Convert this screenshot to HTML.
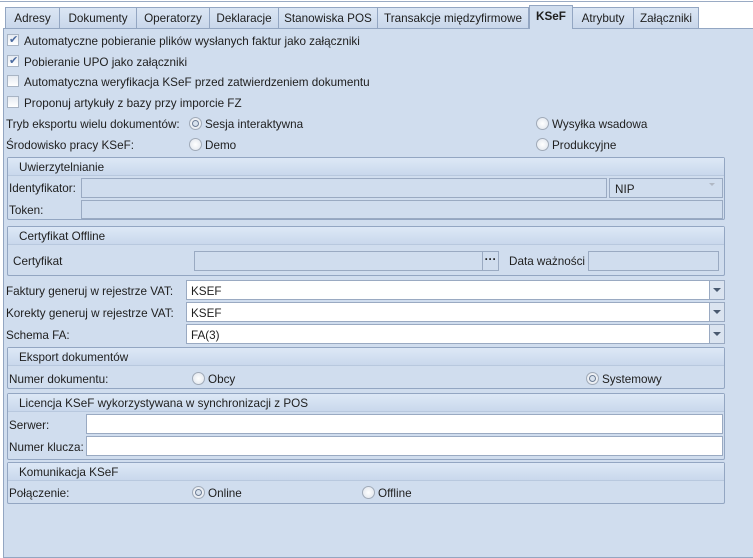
<!DOCTYPE html>
<html><head><meta charset="utf-8"><style>
*{box-sizing:border-box;margin:0;padding:0}
body{width:753px;height:552px;background:#fff;font-family:"Liberation Sans",sans-serif;font-size:11.7px;color:#1e1e1e;position:relative;overflow:hidden}
.a{position:absolute;white-space:nowrap;padding-top:2px}
.topline{position:absolute;left:0;top:1px;width:753px;height:1px;background:#9aabc4}
.tab{position:absolute;top:7px;height:22px;border:1px solid #93a6c2;border-bottom:none;background:linear-gradient(#dbe6f4,#c8d6ea);text-align:center;line-height:22px}
.tab.act{top:5px;height:24px;background:#d0ddee;font-weight:bold;z-index:3}
.panel{position:absolute;left:3px;top:28px;width:760px;height:530px;background:#d0ddee;border:1px solid #93a6c2}
.cb{position:absolute;width:12px;height:12px;border:1px solid #a8b4c4;background:linear-gradient(#e6ebf2,#fff)}
.rd{position:absolute;width:13px;height:13px;border-radius:50%;border:1px solid #a0aab8;background:radial-gradient(#fff,#dde3eb)}
.rd.on::after{content:"";position:absolute;left:2px;top:2px;width:7px;height:7px;box-sizing:border-box;border-radius:50%;border:1px solid #6c7c94;background:#d8e2ee}
.grp{position:absolute;border:1px solid #93a6c2;border-radius:2px;background:#d0ddee}
.gh{height:18px;background:linear-gradient(#dde8f6,#c9d8ec);border-bottom:1px solid #b8c8de;padding-left:11px;line-height:20px}
.in{position:absolute;border:1px solid #9aaac2;background:#d0ddee}
.w{background:#fff}
.arr{position:absolute;width:16px;border:1px solid #9aaac2;background:#dbe4f0}
.arr::after{content:"";position:absolute;left:3px;top:7px;border-left:4px solid transparent;border-right:4px solid transparent;border-top:4px solid #4a5a70}
</style></head><body>
<div class="topline"></div>
<div class="tab" style="left:5px;width:55px">Adresy</div>
<div class="tab" style="left:59px;width:78px">Dokumenty</div>
<div class="tab" style="left:136px;width:74px">Operatorzy</div>
<div class="tab" style="left:209px;width:70px">Deklaracje</div>
<div class="tab" style="left:278px;width:100px">Stanowiska POS</div>
<div class="tab" style="left:377px;width:152px">Transakcje międzyfirmowe</div>
<div class="tab act" style="left:529px;width:44px;border-bottom:none">KSeF</div>
<div class="tab" style="left:572px;width:62px">Atrybuty</div>
<div class="tab" style="left:633px;width:66px">Załączniki</div>
<div class="panel"></div>

<div class="cb" style="left:7px;top:34px"></div><div class="a" style="left:9px;top:31px;font-size:11px;color:#4a6aa0">✔</div>
<div class="a" style="left:24px;top:33px">Automatyczne pobieranie plików wysłanych faktur jako załączniki</div>
<div class="cb" style="left:7px;top:55px"></div><div class="a" style="left:9px;top:52px;font-size:11px;color:#4a6aa0">✔</div>
<div class="a" style="left:24px;top:54px">Pobieranie UPO jako załączniki</div>
<div class="cb" style="left:7px;top:75px"></div>
<div class="a" style="left:24px;top:74px">Automatyczna weryfikacja KSeF przed zatwierdzeniem dokumentu</div>
<div class="cb" style="left:7px;top:96px"></div>
<div class="a" style="left:24px;top:95px">Proponuj artykuły z bazy przy imporcie FZ</div>

<div class="a" style="left:6px;top:116px">Tryb eksportu wielu dokumentów:</div>
<div class="rd on" style="left:189px;top:117px"></div><div class="a" style="left:205px;top:116px">Sesja interaktywna</div>
<div class="rd" style="left:536px;top:117px"></div><div class="a" style="left:552px;top:116px">Wysyłka wsadowa</div>
<div class="a" style="left:6px;top:137px">Środowisko pracy KSeF:</div>
<div class="rd" style="left:189px;top:138px"></div><div class="a" style="left:205px;top:137px">Demo</div>
<div class="rd" style="left:536px;top:138px"></div><div class="a" style="left:552px;top:137px">Produkcyjne</div>

<div class="grp" style="left:7px;top:157px;width:718px;height:63px"><div class="gh">Uwierzytelnianie</div></div>
<div class="a" style="left:9px;top:180px">Identyfikator:</div>
<div class="in" style="left:81px;top:178px;width:526px;height:20px"></div>
<div class="in" style="left:609px;top:178px;width:114px;height:20px;padding:4px 5px">NIP</div>
<div class="a" style="left:709px;top:183px;border-left:3px solid transparent;border-right:3px solid transparent;border-top:3px solid #b0b8c4;padding:0"></div>
<div class="a" style="left:9px;top:202px">Token:</div>
<div class="in" style="left:81px;top:200px;width:642px;height:19px"></div>

<div class="grp" style="left:7px;top:226px;width:718px;height:50px"><div class="gh">Certyfikat Offline</div></div>
<div class="a" style="left:13px;top:253px">Certyfikat</div>
<div class="in" style="left:194px;top:251px;width:290px;height:20px"></div>
<div class="in" style="left:482px;top:251px;width:17px;height:20px;text-align:center;line-height:16px;font-weight:bold">···</div>
<div class="a" style="left:509px;top:253px">Data ważności</div>
<div class="in" style="left:588px;top:251px;width:131px;height:20px"></div>

<div class="a" style="left:6px;top:283px">Faktury generuj w rejestrze VAT:</div>
<div class="in w" style="left:186px;top:280px;width:524px;height:20px;padding:4px 4px">KSEF</div><div class="arr" style="left:709px;top:280px;height:20px"></div>
<div class="a" style="left:6px;top:305px">Korekty generuj w rejestrze VAT:</div>
<div class="in w" style="left:186px;top:302px;width:524px;height:20px;padding:4px 4px">KSEF</div><div class="arr" style="left:709px;top:302px;height:20px"></div>
<div class="a" style="left:6px;top:327px">Schema FA:</div>
<div class="in w" style="left:186px;top:324px;width:524px;height:20px;padding:4px 4px">FA(3)</div><div class="arr" style="left:709px;top:324px;height:20px"></div>

<div class="grp" style="left:7px;top:347px;width:718px;height:42px"><div class="gh">Eksport dokumentów</div></div>
<div class="a" style="left:9px;top:371px">Numer dokumentu:</div>
<div class="rd" style="left:192px;top:372px"></div><div class="a" style="left:208px;top:371px">Obcy</div>
<div class="rd on" style="left:586px;top:372px"></div><div class="a" style="left:602px;top:371px">Systemowy</div>

<div class="grp" style="left:7px;top:393px;width:718px;height:67px"><div class="gh">Licencja KSeF wykorzystywana w synchronizacji z POS</div></div>
<div class="a" style="left:9px;top:417px">Serwer:</div>
<div class="in w" style="left:86px;top:414px;width:637px;height:20px"></div>
<div class="a" style="left:9px;top:439px">Numer klucza:</div>
<div class="in w" style="left:86px;top:436px;width:637px;height:20px"></div>

<div class="grp" style="left:7px;top:462px;width:718px;height:42px"><div class="gh">Komunikacja KSeF</div></div>
<div class="a" style="left:9px;top:485px">Połączenie:</div>
<div class="rd on" style="left:192px;top:486px"></div><div class="a" style="left:208px;top:485px">Online</div>
<div class="rd" style="left:362px;top:486px"></div><div class="a" style="left:378px;top:485px">Offline</div>
</body></html>
